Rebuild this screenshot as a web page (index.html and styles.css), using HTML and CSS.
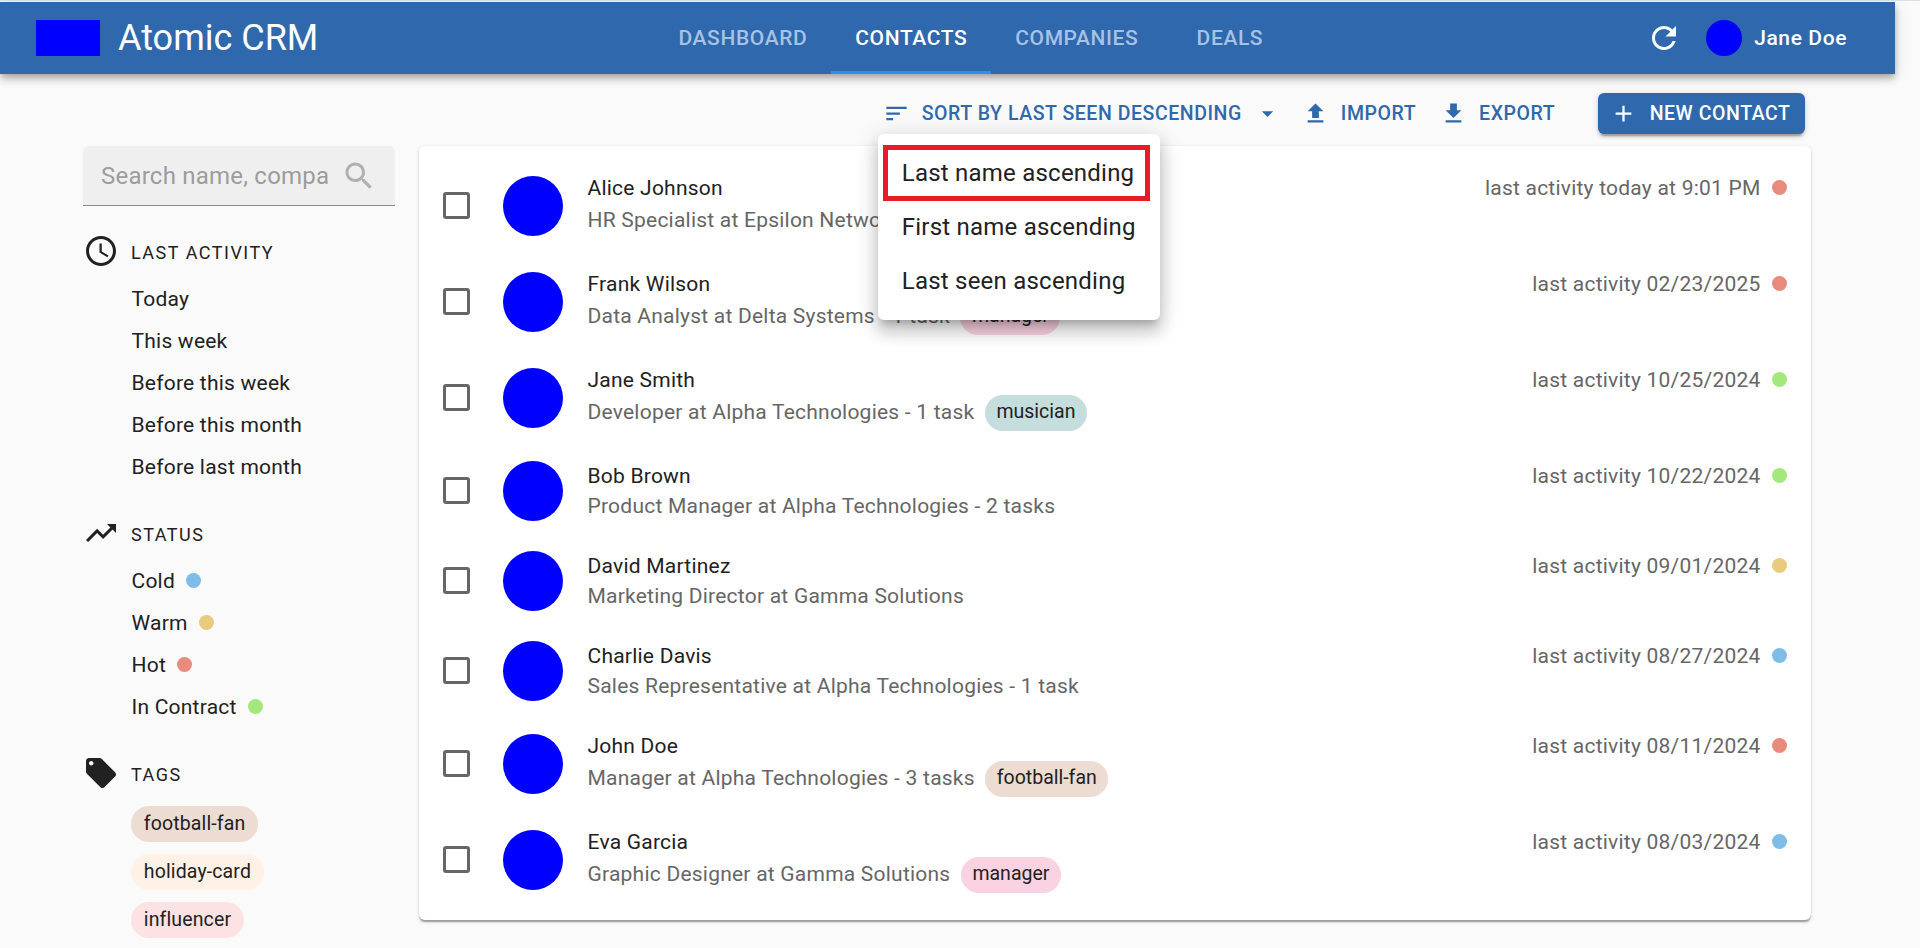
FILE: index.html
```html
<!DOCTYPE html>
<html lang="en">
<head>
<meta charset="utf-8">
<title>Atomic CRM</title>
<link rel="stylesheet" href="styles.css">
</head>
<body>
<header class="appbar">
  <div class="brand"><span class="logo"></span><span class="brand-name">Atomic CRM</span></div>
  <nav class="tabs">
    <a class="tab">Dashboard</a><a class="tab active">Contacts</a><a class="tab">Companies</a><a class="tab">Deals</a>
  </nav>
  <div class="account">
    <svg class="icon" viewBox="0 0 24 24"><path d="M17.65 6.35C16.2 4.9 14.21 4 12 4c-4.42 0-7.99 3.58-7.99 8s3.57 8 7.99 8c3.73 0 6.84-2.55 7.73-6h-2.08c-.82 2.33-3.04 4-5.65 4-3.31 0-6-2.69-6-6s2.69-6 6-6c1.66 0 3.14.69 4.22 1.78L13 11h7V4z"/></svg>
    <span class="user-avatar"></span><span class="user-name">Jane Doe</span>
  </div>
</header>
<div class="toolbar">
  <div class="btn sort">
    <svg class="icon-s" viewBox="0 0 24 24"><path d="M3 18h6v-2H3zM3 6v2h18V6zm0 7h12v-2H3z"/></svg>
    <span>Sort by Last seen descending</span>
    <svg class="icon-s caret" viewBox="0 0 24 24"><path d="m7 10 5 5 5-5z"/></svg>
    <div class="menu">
      <div class="menu-item marked">Last name ascending</div>
      <div class="menu-item">First name ascending</div>
      <div class="menu-item">Last seen ascending</div>
    </div>
  </div>
  <div class="btn import"><svg class="icon-s" viewBox="0 0 24 24"><path d="M5 20h14v-2H5zm0-10h4v6h6v-6h4l-7-7z"/></svg><span>Import</span></div>
  <div class="btn export"><svg class="icon-s" viewBox="0 0 24 24"><path d="M19 9h-4V3H9v6H5l7 7zM5 18v2h14v-2z"/></svg><span>Export</span></div>
  <div class="btn primary"><svg class="icon-s" viewBox="0 0 24 24"><path d="M19 13h-6v6h-2v-6H5v-2h6V5h2v6h6z"/></svg><span>New Contact</span></div>
</div>
<main class="content">
  <aside class="sidebar">
    <div class="search"><span class="placeholder">Search name, compa</span><svg class="icon" viewBox="0 0 24 24"><path d="M15.5 14h-.79l-.28-.27C15.41 12.59 16 11.11 16 9.5 16 5.91 13.09 3 9.5 3S3 5.91 3 9.5 5.91 16 9.5 16c1.61 0 3.09-.59 4.23-1.57l.27.28v.79l5 4.99L20.49 19zm-6 0C7.01 14 5 11.99 5 9.5S7.01 5 9.5 5 14 7.01 14 9.5 11.99 14 9.5 14"/></svg></div>
    <section class="filter">
      <h2 class="filter-head"><svg class="icon" viewBox="0 0 24 24"><path d="M11.99 2C6.47 2 2 6.48 2 12s4.47 10 9.99 10C17.52 22 22 17.52 22 12S17.52 2 11.99 2M12 20c-4.42 0-8-3.58-8-8s3.58-8 8-8 8 3.58 8 8-3.58 8-8 8m.5-13H11v6l5.250 3.150.75-1.230-4.500-2.670z"/></svg><span>Last activity</span></h2>
      <div class="filter-item">Today</div>
      <div class="filter-item">This week</div>
      <div class="filter-item">Before this week</div>
      <div class="filter-item">Before this month</div>
      <div class="filter-item">Before last month</div>
    </section>
    <section class="filter">
      <h2 class="filter-head"><svg class="icon" viewBox="0 0 24 24"><path d="m16 6 2.290 2.290-4.880 4.880-4-4L2 16.590 3.410 18l6-6 4 4 6.300-6.290L22 12V6z"/></svg><span>Status</span></h2>
      <div class="filter-item">Cold<i class="dot cold"></i></div>
      <div class="filter-item">Warm<i class="dot warm"></i></div>
      <div class="filter-item">Hot<i class="dot hot"></i></div>
      <div class="filter-item">In Contract<i class="dot contract"></i></div>
    </section>
    <section class="filter">
      <h2 class="filter-head"><svg class="icon" viewBox="0 0 24 24"><path d="m21.410 11.580-9-9C12.050 2.220 11.550 2 11 2H4c-1.100 0-2 .9-2 2v7c0 .55.22 1.050.59 1.420l9 9c.36.36.86.58 1.410.58s1.050-.22 1.410-.59l7-7c.37-.36.59-.86.59-1.410s-.23-1.060-.59-1.420M5.500 7C4.670 7 4 6.330 4 5.500S4.670 4 5.500 4 7 4.670 7 5.500 6.330 7 5.500 7"/></svg><span>Tags</span></h2>
      <div class="chips"><span class="chip sand">football-fan</span><span class="chip peach">holiday-card</span><span class="chip rose">influencer</span></div>
    </section>
  </aside>
  <div class="card">
    <div class="row"><i class="check"></i><i class="avatar"></i><div class="info"><p class="name">Alice Johnson</p><p class="detail tall">HR Specialist at Epsilon Networks</p></div><p class="activity">last activity today at 9:01 PM<i class="dot hot"></i></p></div>
    <div class="row"><i class="check"></i><i class="avatar"></i><div class="info"><p class="name">Frank Wilson</p><p class="detail tall">Data Analyst at Delta Systems - 1 task<span class="chip pink">manager</span></p></div><p class="activity">last activity 02/23/2025<i class="dot hot"></i></p></div>
    <div class="row"><i class="check"></i><i class="avatar"></i><div class="info"><p class="name">Jane Smith</p><p class="detail tall">Developer at Alpha Technologies - 1 task<span class="chip teal">musician</span></p></div><p class="activity">last activity 10/25/2024<i class="dot contract"></i></p></div>
    <div class="row"><i class="check"></i><i class="avatar"></i><div class="info"><p class="name">Bob Brown</p><p class="detail">Product Manager at Alpha Technologies - 2 tasks</p></div><p class="activity">last activity 10/22/2024<i class="dot contract"></i></p></div>
    <div class="row"><i class="check"></i><i class="avatar"></i><div class="info"><p class="name">David Martinez</p><p class="detail">Marketing Director at Gamma Solutions</p></div><p class="activity">last activity 09/01/2024<i class="dot warm"></i></p></div>
    <div class="row"><i class="check"></i><i class="avatar"></i><div class="info"><p class="name">Charlie Davis</p><p class="detail">Sales Representative at Alpha Technologies - 1 task</p></div><p class="activity">last activity 08/27/2024<i class="dot cold"></i></p></div>
    <div class="row"><i class="check"></i><i class="avatar"></i><div class="info"><p class="name">John Doe</p><p class="detail tall">Manager at Alpha Technologies - 3 tasks<span class="chip sand">football-fan</span></p></div><p class="activity">last activity 08/11/2024<i class="dot hot"></i></p></div>
    <div class="row"><i class="check"></i><i class="avatar"></i><div class="info"><p class="name">Eva Garcia</p><p class="detail tall">Graphic Designer at Gamma Solutions<span class="chip pink">manager</span></p></div><p class="activity">last activity 08/03/2024<i class="dot cold"></i></p></div>
  </div>
</main>
</body>
</html>
```

FILE: styles.css
```css
*, *::after { box-sizing: border-box; }
body {
  margin: 0;
  height: 948px;
  overflow: hidden;
  background: #fafafa;
  border-top: 1px solid #d9e0e4;
  padding-top: 1px;
  font-family: Roboto, "Liberation Sans", sans-serif;
  font-size: 21px;
  line-height: 30px;
  letter-spacing: 0.01071em;
  color: #212121;
}
p, h2 { margin: 0; font-weight: 400; }
.icon { width: 36px; height: 36px; fill: currentColor; flex: none; }
.icon-s { width: 27px; height: 27px; fill: currentColor; flex: none; }

.appbar {
  width: 1895px;
  height: 72px;
  display: grid;
  grid-template-columns: 654px 1fr auto;
  background: #2f68ac;
  color: #fff;
  padding-right: 48px;
  box-shadow: 0 3px 6px -1.5px rgba(0,0,0,.2), 0 6px 7.5px rgba(0,0,0,.14), 0 1.5px 15px rgba(0,0,0,.12);
}
.brand { display: flex; align-items: center; gap: 18px; padding-left: 36px; }
.logo { width: 64px; height: 36px; background: #00f; }
.brand-name { font-size: 36px; line-height: 48px; letter-spacing: 0; }
.tabs { display: flex; }
.tab {
  min-width: 135px;
  padding: 0 23.5px 0 24.5px;
  text-align: center;
  line-height: 72px;
  font-weight: 500;
  letter-spacing: 0.02857em;
  text-transform: uppercase;
  color: #a6c2e4;
}
.tab.active { color: #fff; box-shadow: inset 0 -3px #2f8fe5; }
.account { display: flex; align-items: center; }
.user-avatar { width: 36px; height: 36px; border-radius: 50%; background: #00f; margin: 0 12px 0 24px; }
.user-name { font-weight: 500; letter-spacing: 0.02857em; }

.toolbar {
  display: flex;
  align-items: center;
  justify-content: flex-end;
  height: 41px;
  margin-top: 19px;
  padding-right: 115px;
}
.btn {
  display: flex;
  align-items: center;
  height: 41px;
  font-size: 19.5px;
  font-weight: 500;
  letter-spacing: 0.02857em;
  text-transform: uppercase;
  white-space: nowrap;
  color: #2f68ac;
}
.btn .icon-s { margin-right: 12px; }
.btn .caret { margin: 0 0 0 12px; }
.sort { position: relative; margin-right: 21px; }
.import { margin-right: 24px; }
.export { margin-right: 43px; }
.primary {
  padding: 0 14.5px 0 12px;
  border-radius: 6px;
  background: #2f68ac;
  color: #fff;
  box-shadow: 0 4.5px 1.5px -3px rgba(0,0,0,.2), 0 3px 3px rgba(0,0,0,.14), 0 1.5px 7.5px rgba(0,0,0,.12);
}
.primary .icon-s { margin-right: 12.5px; }

.menu {
  position: absolute;
  z-index: 2;
  top: 41px;
  left: -5px;
  width: 282px;
  padding: 12px 0;
  border-radius: 6px;
  background: #fff;
  color: #212121;
  font-size: 24px;
  font-weight: 400;
  letter-spacing: 0.00938em;
  text-transform: none;
  box-shadow: 0 7.5px 7.5px -4.5px rgba(0,0,0,.2), 0 12px 15px 1.5px rgba(0,0,0,.14), 0 4.5px 21px 3px rgba(0,0,0,.12);
}
.menu-item { height: 54px; line-height: 54px; padding-left: 24px; }
.marked { position: relative; }
.marked::after {
  content: "";
  position: absolute;
  left: 5px;
  top: -1px;
  width: 267px;
  height: 56px;
  border: 5px solid #e81c24;
}

.content { display: flex; align-items: flex-start; gap: 24px; margin-top: 12px; padding-left: 83px; }
.sidebar { width: 312px; }
.search {
  display: flex;
  align-items: center;
  height: 60px;
  padding: 0 18px;
  justify-content: space-between;
  border-bottom: 1px solid #8a8a8a;
  border-radius: 6px 6px 0 0;
  background: #efefef;
  color: #b0b0b0;
}
.placeholder { color: #9c9c9c; font-size: 24px; letter-spacing: 0.00938em; }
.filter { margin-bottom: 24px; }
.search + .filter { margin-top: 23px; }
.filter-head {
  display: flex;
  gap: 12px;
  height: 48px;
  padding-top: 4px;
  font-size: 18px;
  line-height: 40px;
  letter-spacing: 0.08333em;
  text-transform: uppercase;
}
.filter-item { display: flex; align-items: center; height: 42px; padding: 1px 0 0 48.5px; }
.dot { width: 15px; height: 15px; flex: none; border-radius: 50%; margin: 0 0 1px 11.5px; }
.filter-item .dot { margin-left: 11px; }
.cold { background: #7dbde8; }
.warm { background: #e8cb7d; }
.hot { background: #e88b7d; }
.contract { background: #a4e87d; }
.chips { display: flex; flex-direction: column; align-items: flex-start; gap: 12px; padding: 7px 0 0 48px; }
.chip {
  height: 36px;
  padding: 0 11.5px;
  border-radius: 18px;
  font-size: 19.5px;
  line-height: 35px;
  letter-spacing: 0;
  color: #212121;
}
.chips .chip { padding: 0 12.75px; letter-spacing: 0.007em; }
.sand { background: #eddcd2; }
.peach { background: #fff1e6; }
.rose { background: #fde2e4; }
.pink { background: #fad2e1; }
.teal { background: #c5dedd; }

.card {
  width: 1392px;
  padding: 12px 24px 12px 20px;
  border-radius: 6px;
  background: #fff;
  box-shadow: 0 3px 1.5px -1.5px rgba(0,0,0,.2), 0 1.5px 1.5px rgba(0,0,0,.14), 0 1.5px 4.5px rgba(0,0,0,.12);
}
.row { display: flex; align-items: center; padding: 15px 0; }
.check { width: 27px; height: 27px; margin: 0 0 1px 4px; border: 3px solid #666; border-radius: 3px; }
.avatar { width: 60px; height: 60px; margin: 0 24.5px 0 33px; border-radius: 50%; background: #00f; }
.info { flex: 1; }
.detail { display: flex; align-items: center; color: #666; }
.tall { height: 36px; padding-bottom: 2px; }
.detail .chip { align-self: flex-start; margin-left: 10.5px; line-height: 34px; }
.activity { display: flex; align-items: center; align-self: flex-start; color: #666; }
```
